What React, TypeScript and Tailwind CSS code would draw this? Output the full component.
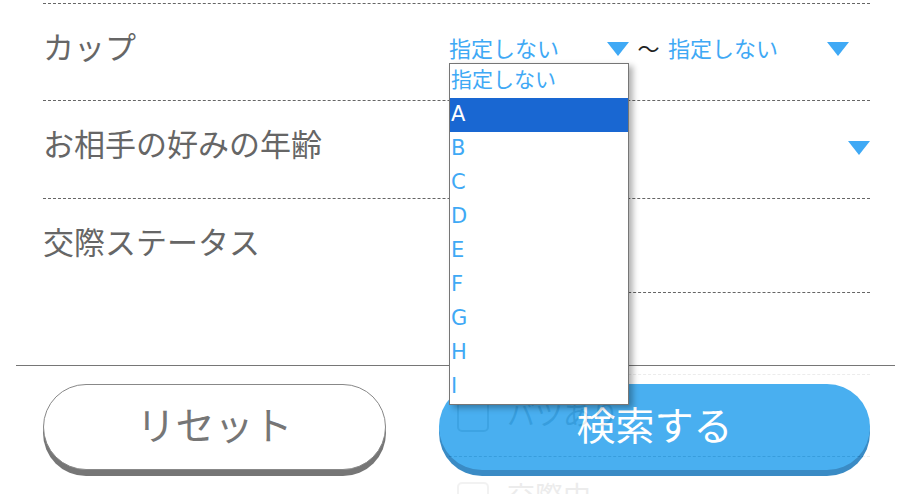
import React from 'react';

const FONT = "font-['DejaVu_Sans','Noto_Sans_CJK_JP',sans-serif]";

function Tri() {
  return (
    <svg width="22" height="14" viewBox="0 0 22 14" className="shrink-0">
      <polygon points="0,0 22,0 11,14" fill="#3fa9f5" />
    </svg>
  );
}

const OPTIONS = ['指定しない', 'A', 'B', 'C', 'D', 'E', 'F', 'G', 'H', 'I'];

const STATUS = [
  { label: '未婚', h: 'h-[94px] pt-[12px]' },
  { label: '恋人なし', h: 'h-[82px]' },
  { label: 'バツあり', h: 'h-[82px]' },
  { label: '交際中', h: 'h-[82px]' },
];

export default function App() {
  return (
    <div className={`relative w-[911px] h-[494px] overflow-hidden bg-white ${FONT}`}>
      {/* form rows */}
      <div className="pl-[43px] pr-[41px]">
        <div className="h-[4px] border-b border-dashed border-[#666]" />

        {/* カップ */}
        <div className="flex h-[97px] border-b border-dashed border-[#666]">
          <div className="w-[406px] pt-[26px] text-[31px] leading-[36px] text-[#666]">カップ</div>
          <div className="flex flex-1 items-center h-[36px] mt-[27px] text-[22px] text-[#3fa9f5]">
            <div className="flex w-[180px] items-center justify-between">
              <span>指定しない</span>
              <Tri />
            </div>
            <span className="w-[39px] text-center text-[#222]">〜</span>
            <div className="flex w-[181px] items-center justify-between">
              <span>指定しない</span>
              <Tri />
            </div>
          </div>
        </div>

        {/* お相手の好みの年齢 */}
        <div className="flex h-[98px] border-b border-dashed border-[#666]">
          <div className="w-[406px] pt-[26px] text-[31px] leading-[36px] text-[#666]">お相手の好みの年齢</div>
          <div className="flex flex-1 items-center justify-between h-[36px] mt-[29px] text-[22px] text-[#3fa9f5]">
            <span>指定しない</span>
            <Tri />
          </div>
        </div>

        {/* 交際ステータス */}
        <div className="flex">
          <div className="w-[406px] pt-[26px] text-[31px] leading-[36px] text-[#666]">交際ステータス</div>
          <div className="flex-1">
            {STATUS.map((s) => (
              <div key={s.label} className={`flex items-center gap-[18px] pl-[8px] border-b border-dashed border-[#666] ${s.h}`}>
                <div className="w-[32px] h-[32px] rounded-[5px] border-2 border-[#999] bg-white" />
                <span className="text-[28px] text-[#666]">{s.label}</span>
              </div>
            ))}
          </div>
        </div>
      </div>

      {/* fixed footer, slightly see-through */}
      <div className="absolute left-0 right-0 top-[365px] bottom-0 bg-white opacity-[0.88]">
        <div className="mx-[16px] border-t border-[#646464]" />
        <div className="flex gap-[53px] pl-[43px] pt-[18px]">
          <button className="w-[343px] h-[86px] rounded-full border border-[#787878] bg-white text-[39px] text-[#646464] shadow-[0_6px_0_#646464]">
            リセット
          </button>
          <button className="w-[431px] h-[86px] rounded-full bg-[#31a5ee] text-[39px] text-white shadow-[0_6px_0_#1f7cbe]">
            検索する
          </button>
        </div>
      </div>

      {/* open select list */}
      <div className="absolute left-[449px] top-[63px] z-10 w-[180px] border border-[#767676] bg-white shadow-[4px_3px_6px_rgba(0,0,0,0.3)]">
        {OPTIONS.map((o, i) => (
          <div
            key={o}
            className={`h-[34px] pl-[1px] text-[21px] leading-[32px] ${i === 1 ? 'bg-[#1967d2] text-white' : 'text-[#3fa9f5]'}`}
          >
            {o}
          </div>
        ))}
      </div>
    </div>
  );
}
